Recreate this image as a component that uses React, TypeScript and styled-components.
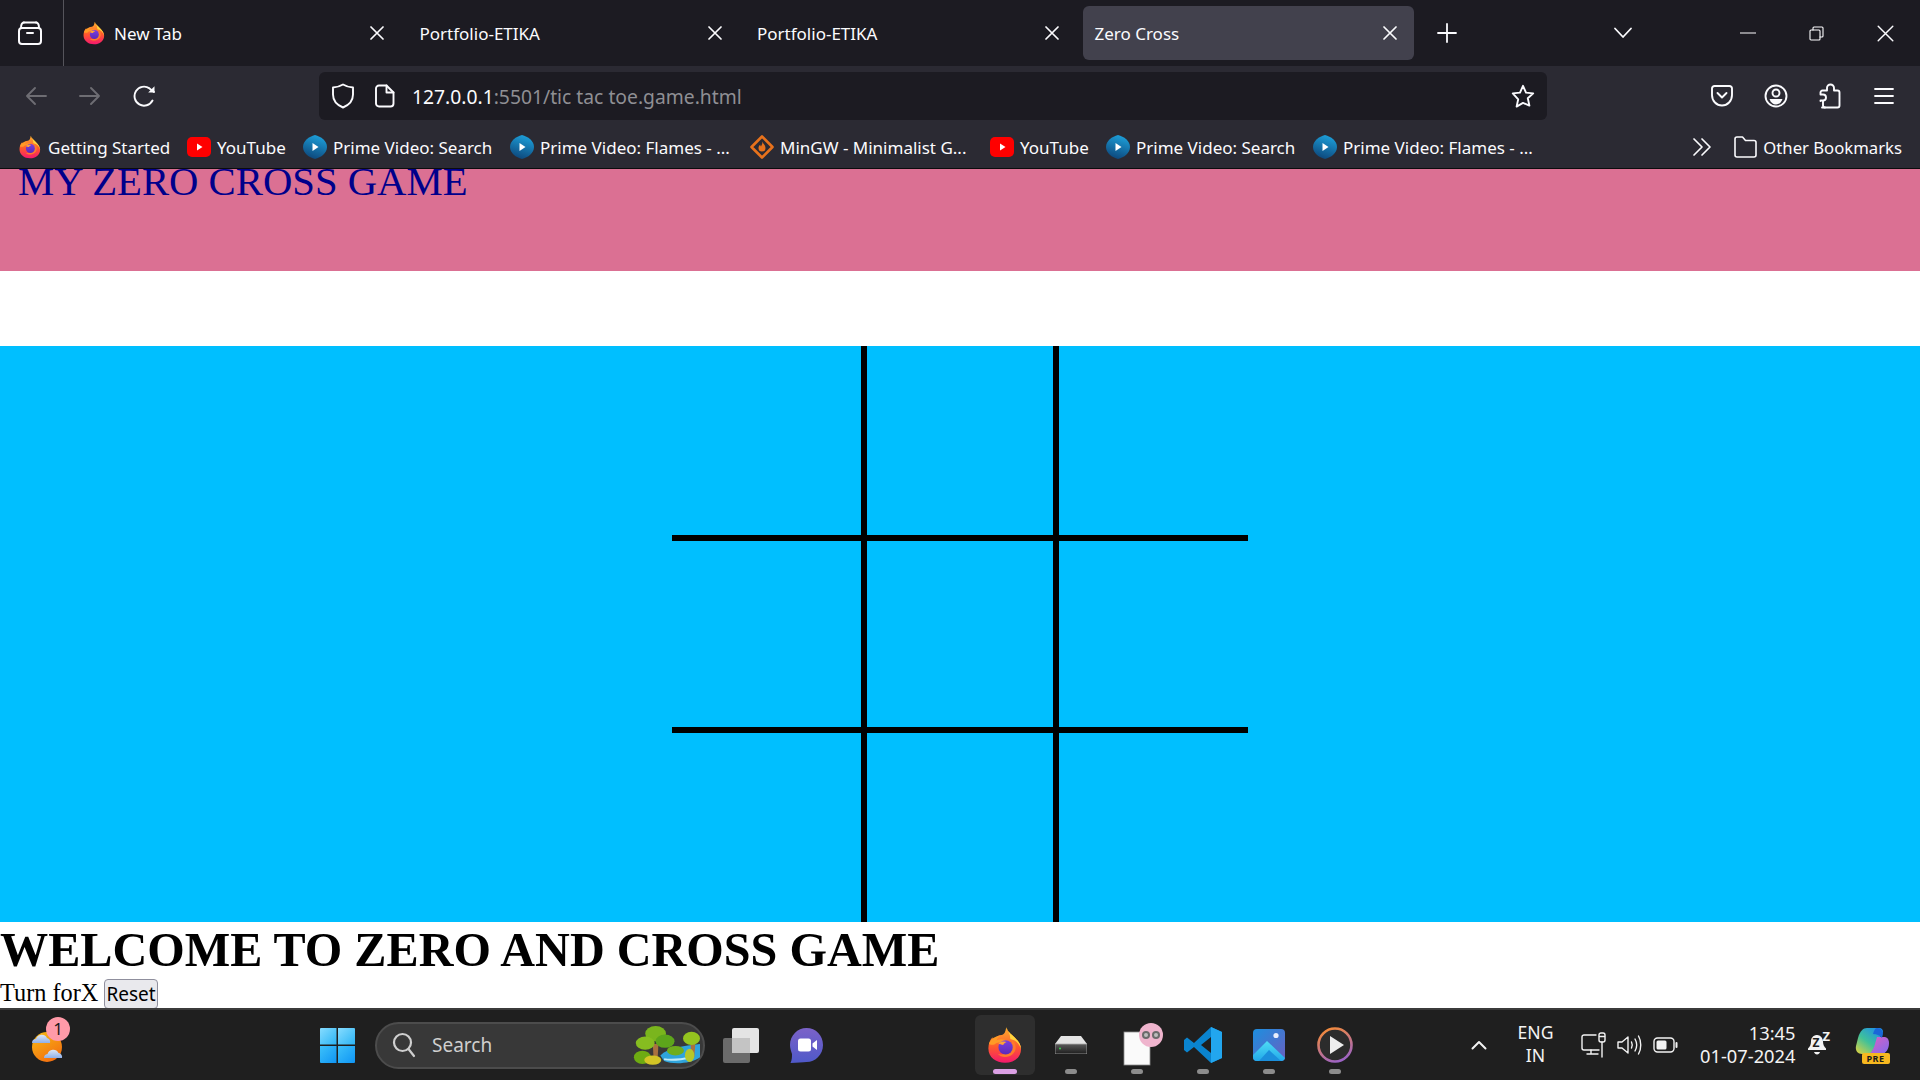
import React from 'react';
import styled, { createGlobalStyle } from 'styled-components';

const UI_FONT = '"Noto Sans", "Open Sans", sans-serif';
const PAGE_FONT = '"Liberation Serif", "Times New Roman", serif';

const GlobalStyle = createGlobalStyle`
  html, body {
    margin: 0;
    padding: 0;
    height: 100%;
    overflow: hidden;
    background: #fff;
  }
  #root {
    height: 100%;
  }
`;

/* ---------- icons ---------- */

const Line = styled.svg.attrs({ fill: 'none', stroke: 'currentColor', strokeLinecap: 'round', strokeLinejoin: 'round' })`
  display: block;
  flex: none;
`;

const Pic = styled.svg`
  display: block;
  flex: none;
`;

const FirefoxLogo = ({ size, uid }: { size: number; uid: string }) => (
  <Pic width={size} height={size} viewBox="0 0 32 32">
    <defs>
      <linearGradient id={`${uid}-body`} x1="0.5" y1="0" x2="0.5" y2="1">
        <stop offset="0" stopColor="#ffb02e" />
        <stop offset="0.55" stopColor="#ff5a2c" />
        <stop offset="1" stopColor="#f5186e" />
      </linearGradient>
      <linearGradient id={`${uid}-core`} x1="0.5" y1="0" x2="0.5" y2="1">
        <stop offset="0" stopColor="#7a3fe0" />
        <stop offset="1" stopColor="#5b2ab8" />
      </linearGradient>
    </defs>
    <path d="M17 1c1 3.500 4 5.500 7 8.500 3 3 5.500 6 5.500 10 0 7-6 11.500-13.500 11.500S2 26.500 2 19c0-4 1.500-7.500 3.500-9.500 0 1 .5 2 1 2.500C8 9 10.500 7.500 13 7.500c2.500 0 3.500-3 4-6.500z" fill={`url(#${uid}-body)`} />
    <path d="M17 1c1 3.500 4 5.500 7 8.500 3 3 5.500 6 5.500 10-1.500-4.500-4-7.500-9-8.500C20.500 7.500 19 4.500 17 1z" fill="#ffd53d" />
    <path d="M2.500 15c1.500-4 5-6.500 9.500-6.500-1.500 1-2.500 2-3 3.500 3-1.500 7-1 9.500 1-2.500-.5-4.500 0-6 1-2-.5-4 0-5.500 1.500-1.500.5-3.500.500-4.500-.500z" fill="#ff9a26" />
    <path d="M22 12c2 1.500 3 3.500 3 6 0 4.500-4 8-9 8-2.500 0-4.500-1-6-2.500 5 1.500 11-1 12-11.500z" fill="#ff7a2a" />
    <circle cx="16.500" cy="18" r="6" fill={`url(#${uid}-core)`} />
    <path d="M10.500 14.500c2-1.500 5-2 7-1-1.500.5-2.500 1.500-3 2.500-1.500-.5-3-.5-4-1.500z" fill="#ffa436" />
  </Pic>
);

const YouTubeIcon = () => (
  <Pic width={24} height={20} viewBox="0 0 24 20">
    <rect width="24" height="20" rx="5" fill="#f00" />
    <path d="M10 6.500 15.500 10 10 13.500z" fill="#fff" />
  </Pic>
);

const PrimeIcon = ({ uid }: { uid: string }) => (
  <Pic width={24} height={24} viewBox="0 0 24 24">
    <defs>
      <linearGradient id={uid} x1="0.6" y1="0" x2="0.3" y2="1">
        <stop offset="0" stopColor="#1d9fd9" />
        <stop offset="1" stopColor="#0d4579" />
      </linearGradient>
    </defs>
    <path d="M12 0c6 1.500 12 6 12 12s-6 10.500-12 12C6 22.500 0 18 0 12S6 1.500 12 0z" fill={`url(#${uid})`} />
    <path d="M9.500 8 15.500 12l-6 4z" fill="#fff" />
  </Pic>
);

const MingwIcon = () => (
  <Pic width={24} height={24} viewBox="0 0 24 24">
    <path d="M12 1.500 22.500 12 12 22.500 1.500 12z" fill="none" stroke="#e8721c" strokeWidth="2.600" strokeLinejoin="round" />
    <path d="M12.500 6.500c.5 2.500 3 3.500 3 6.500a3.500 3.500 0 0 1-7 0c0-1.500.8-2.500 1.800-3.500 0 1 .2 1.500.7 2 .8-1.500 1.500-3 1.500-5z" fill="#e8721c" />
  </Pic>
);

const SidebarIcon = () => (
  <Line width={26} height={26} viewBox="0 0 26 26" strokeWidth={2}>
    <rect x="2" y="8" width="22" height="16" rx="3" />
    <path d="M6.500 2.500h13M10 13h6" />
    <path d="M4 8c0-3 1-5.500 3-5.500M22 8c0-3-1-5.500-3-5.500" />
  </Line>
);

const CloseIcon = ({ size = 14, weight = 1.7 }: { size?: number; weight?: number }) => (
  <Line width={size} height={size} viewBox="0 0 14 14" strokeWidth={weight}>
    <path d="M1 1l12 12M13 1 1 13" />
  </Line>
);

const PlusIcon = () => (
  <Line width={20} height={20} viewBox="0 0 20 20" strokeWidth={1.8}>
    <path d="M10 1v18M1 10h18" />
  </Line>
);

const ChevronDownIcon = () => (
  <Line width={20} height={12} viewBox="0 0 20 12" strokeWidth={1.8}>
    <path d="M2 1.500 10 10l8-8.500" />
  </Line>
);

const MinimizeIcon = () => (
  <Line width={16} height={2} viewBox="0 0 16 2" strokeWidth={1.2}>
    <path d="M0 1h16" />
  </Line>
);

const RestoreIcon = () => (
  <Line width={15} height={15} viewBox="0 0 15 15" strokeWidth={1.1}>
    <rect x="1" y="4" width="10" height="10" rx="1" />
    <path d="M4 4V2a1 1 0 0 1 1-1h8a1 1 0 0 1 1 1v8a1 1 0 0 1-1 1h-2" />
  </Line>
);

const BackIcon = () => (
  <Line width={22} height={20} viewBox="0 0 22 20" strokeWidth={1.9}>
    <path d="M21 10H2M10 2l-8 8 8 8" />
  </Line>
);

const ForwardIcon = () => (
  <Line width={22} height={20} viewBox="0 0 22 20" strokeWidth={1.9}>
    <path d="M1 10h19M12 2l8 8-8 8" />
  </Line>
);

const ReloadIcon = () => (
  <Line width={23} height={23} viewBox="0 0 23 23" strokeWidth={1.9}>
    <path d="M19.500 15.500A9.500 9.500 0 1 1 16.500 3.400L21 7" />
    <path d="M21.500 1.200v6.300h-6.300z" fill="currentColor" stroke="none" />
  </Line>
);

const ShieldIcon = () => (
  <Line width={24} height={26} viewBox="0 0 24 26" strokeWidth={1.9}>
    <path d="M12 1.500c3 1.800 6 2.800 10 3v7c0 6.500-4 10.500-10 13-6-2.500-10-6.500-10-13v-7c4-.2 7-1.200 10-3z" />
  </Line>
);

const PageIcon = () => (
  <Line width={20} height={24} viewBox="0 0 20 24" strokeWidth={1.9}>
    <path d="M4 1.500h7.500L18.500 8.500V19.500a3 3 0 0 1-3 3H4a3 3 0 0 1-3-3v-15a3 3 0 0 1 3-3z" />
    <path d="M11.500 1.500v7h7" />
  </Line>
);

const StarIcon = () => (
  <Line width={24} height={24} viewBox="0 0 24 24" strokeWidth={1.9}>
    <path d="M12 1.800l3 6.800 7.200.8-5.400 4.900 1.600 7.300L12 18.900l-6.400 3.700 1.600-7.300L1.800 9.400 9 8.600z" />
  </Line>
);

const PocketIcon = () => (
  <Line width={22} height={24} viewBox="0 0 22 24" strokeWidth={1.9}>
    <path d="M3.500 2h15A2.500 2.500 0 0 1 21 4.500V11c0 6-4.500 10.500-10 10.500S1 17 1 11V4.500A2.500 2.500 0 0 1 3.500 2z" />
    <path d="M6.500 9l4.500 4.500L15.500 9" />
  </Line>
);

const AccountIcon = () => (
  <Line width={24} height={24} viewBox="0 0 24 24" strokeWidth={1.9}>
    <circle cx="12" cy="12" r="10.500" />
    <circle cx="12" cy="9" r="3.500" />
    <path d="M5.500 15h13c-1 3.500-3.500 5.500-6.500 5.500S6.500 18.500 5.500 15z" fill="currentColor" stroke="none" />
  </Line>
);

const PuzzleIcon = () => (
  <Line width={22} height={26} viewBox="0 0 22 26" strokeWidth={1.9}>
    <path d="M3 24.500h15.500a2 2 0 0 0 2-2V9.500a2 2 0 0 0-2-2h-3.500V5a3.500 3.500 0 0 0-7 0v2.500H3.500a2 2 0 0 0-2 2v2h2.500a3 3 0 0 1 0 6H1.500v.5" />
    <path d="M4 18v4.500a2 2 0 0 0 2 2" />
  </Line>
);

const MenuIcon = () => (
  <Line width={20} height={18} viewBox="0 0 20 18" strokeWidth={1.8}>
    <path d="M1 2h18M1 9h18M1 16h18" />
  </Line>
);

const DoubleChevronIcon = () => (
  <Line width={20} height={20} viewBox="0 0 20 20" strokeWidth={1.7}>
    <path d="M2 2l8 8-8 8M10 2l8 8-8 8" />
  </Line>
);

const FolderIcon = () => (
  <Line width={23} height={22} viewBox="0 0 23 22" strokeWidth={1.6}>
    <path d="M3 1h5.500l3 3.500H20a2 2 0 0 1 2 2V19a2 2 0 0 1-2 2H3a2 2 0 0 1-2-2V3a2 2 0 0 1 2-2z" />
  </Line>
);

const WeatherIcon = () => (
  <Pic width={44} height={44} viewBox="0 0 44 44">
    <defs>
      <linearGradient id="sun" x1="0.2" y1="0" x2="0.8" y2="1">
        <stop offset="0" stopColor="#f7b614" />
        <stop offset="1" stopColor="#f36a10" />
      </linearGradient>
      <linearGradient id="cloud" x1="0.5" y1="0" x2="0.5" y2="1">
        <stop offset="0" stopColor="#dbe6f5" />
        <stop offset="1" stopColor="#8fb0e8" />
      </linearGradient>
    </defs>
    <circle cx="18" cy="24" r="15" fill="url(#sun)" />
    <path d="M3 20a4 4 0 0 1 4-4 6 6 0 0 1 11-1 4 4 0 0 1 3 5z" fill="url(#cloud)" />
    <path d="M15 35a4 4 0 0 1 3.500-4 6 6 0 0 1 11-1 4 4 0 0 1 3.500 5z" fill="url(#cloud)" />
  </Pic>
);

const WindowsIcon = () => (
  <Pic width={35} height={35} viewBox="0 0 35 35">
    <defs>
      <linearGradient id="winA" x1="0" y1="0" x2="1" y2="1">
        <stop offset="0" stopColor="#86dcff" />
        <stop offset="1" stopColor="#2cb4f5" />
      </linearGradient>
      <linearGradient id="winB" x1="0" y1="0" x2="1" y2="1">
        <stop offset="0" stopColor="#3dc1fa" />
        <stop offset="1" stopColor="#0f95f4" />
      </linearGradient>
    </defs>
    <path d="M1 0h15.500v16.500H0V1a1 1 0 0 1 1-1z" fill="url(#winA)" />
    <path d="M18 0h16a1 1 0 0 1 1 1v15.500H18z" fill="url(#winA)" />
    <path d="M0 18h16.500v17H1a1 1 0 0 1-1-1z" fill="url(#winB)" />
    <path d="M18 18h17v16a1 1 0 0 1-1 1H18z" fill="url(#winB)" />
  </Pic>
);

const SearchGlyph = () => (
  <Line width={24} height={26} viewBox="0 0 24 26" strokeWidth={2.200}>
    <circle cx="10.500" cy="10.500" r="8.500" />
    <path d="M16.500 17l5.500 7" />
  </Line>
);

const TreesArt = () => (
  <Pic width={68} height={42} viewBox="0 0 72 42">
    <path d="M30 32c8-8 24-10 42-12v14c-10 7-28 8-38 4z" fill="#2fa4dc" />
    <path d="M34 36c10 2 20 0 30-2" stroke="#bfeaf8" strokeWidth="2" fill="none" />
    <path d="M22 20l1 18h4l1-18z" fill="#a9713f" />
    <path d="M62 20l1 14h3l1-14z" fill="#a9713f" />
    <ellipse cx="25" cy="9" rx="11" ry="8" fill="#7ab51d" />
    <ellipse cx="14" cy="19" rx="10" ry="7" fill="#86bd20" />
    <ellipse cx="35" cy="17" rx="10" ry="7" fill="#5da51b" />
    <ellipse cx="63" cy="14" rx="9" ry="7" fill="#94c41f" />
    <ellipse cx="46" cy="27" rx="9" ry="5" fill="#6fad1c" />
    <ellipse cx="11" cy="34" rx="9" ry="7" fill="#6eab12" />
    <ellipse cx="22" cy="37" rx="9" ry="5" fill="#d3c526" />
    <ellipse cx="61" cy="32" rx="5" ry="7" fill="#b6c729" />
  </Pic>
);

const TaskViewIcon = () => (
  <Pic width={38} height={35} viewBox="0 0 38 35">
    <rect x="0" y="10" width="27" height="25" rx="2" fill="#6b6b6b" />
    <rect x="9" y="0" width="27" height="25" rx="2" fill="#f5f5f5" fillOpacity="0.92" />
    <rect x="9" y="10" width="18" height="15" fill="#c4c4c4" />
  </Pic>
);

const MeetIcon = () => (
  <Pic width={33} height={35} viewBox="0 0 33 35">
    <defs>
      <linearGradient id="meet" x1="0.5" y1="0" x2="0.5" y2="1">
        <stop offset="0" stopColor="#7b62c8" />
        <stop offset="1" stopColor="#4f59c9" />
      </linearGradient>
    </defs>
    <path d="M16.500 0C26 0 33 7.500 33 17s-7.500 17-16.500 17c-3.500 0-9 1-16 1 1.500-3 1.500-6 1.500-9C1 23 0 20 0 17 0 7.500 7.500 0 16.500 0z" fill="url(#meet)" />
    <rect x="8" y="10.500" width="13" height="13" rx="2.500" fill="#fff" />
    <path d="M22.500 15.500 27 12v10l-4.500-3.500z" fill="#fff" />
  </Pic>
);

const DriveIcon = () => (
  <Pic width={32} height={18} viewBox="0 0 32 18">
    <defs>
      <linearGradient id="drive" x1="0.5" y1="0" x2="0.5" y2="1">
        <stop offset="0" stopColor="#5a5a5a" />
        <stop offset="1" stopColor="#1d1d1d" />
      </linearGradient>
    </defs>
    <path d="M6 0h20l6 8H0z" fill="#e4e4e4" />
    <rect x="0" y="8" width="32" height="10" rx="1" fill="url(#drive)" stroke="#a8a8a8" strokeWidth="0.8" />
    <circle cx="5" cy="12.500" r="1" fill="#35d24a" />
  </Pic>
);

const NotesIcon = () => (
  <Pic width={52} height={44} viewBox="0 0 52 44">
    <rect x="13" y="9" width="26" height="33" fill="#fafafa" stroke="#8d8d8d" strokeWidth="0.8" />
    <circle cx="40" cy="12" r="12" fill="#efb4cd" />
    <circle cx="35" cy="12" r="4" fill="#6b6b6b" />
    <circle cx="45" cy="12" r="4" fill="#6b6b6b" />
    <circle cx="35" cy="12" r="2" fill="#bdbdbd" />
    <circle cx="45" cy="12" r="2" fill="#bdbdbd" />
  </Pic>
);

const VsCodeIcon = () => (
  <Pic width={38} height={36} viewBox="0 0 38 36">
    <path d="M27 0l11 5v26l-11 5-17-16-7 5.500-3-2.500v-10l3-2.500 7 5.500zm0 10L17 18l10 8z" fill="#0a84cf" />
    <path d="M27 0l11 5v26l-11 5z" fill="#22a6ee" />
  </Pic>
);

const PhotosIcon = () => (
  <Pic width={32} height={32} viewBox="0 0 32 32">
    <defs>
      <linearGradient id="ph" x1="0" y1="0" x2="1" y2="1">
        <stop offset="0" stopColor="#1c8fe0" />
        <stop offset="1" stopColor="#6a5fc0" />
      </linearGradient>
      <linearGradient id="phM" x1="0.5" y1="0" x2="0.5" y2="1">
        <stop offset="0" stopColor="#4fdcf5" />
        <stop offset="1" stopColor="#22a8ea" />
      </linearGradient>
    </defs>
    <rect width="32" height="32" rx="4" fill="url(#ph)" />
    <circle cx="23" cy="6.500" r="2.600" fill="#e8eefc" />
    <path d="M0 26 14 12l18 17v-1a4 4 0 0 1-4 4H4a4 4 0 0 1-4-4z" fill="url(#phM)" />
    <path d="M6 32l10-11 12 11z" fill="#1b8fdc" />
  </Pic>
);

const PlayerIcon = () => (
  <Pic width={36} height={36} viewBox="0 0 36 36">
    <defs>
      <linearGradient id="pl" x1="0.3" y1="0" x2="0.7" y2="1">
        <stop offset="0" stopColor="#f28a3c" />
        <stop offset="1" stopColor="#9a62c8" />
      </linearGradient>
    </defs>
    <circle cx="18" cy="18" r="16.500" fill="#2c2c2c" stroke="url(#pl)" strokeWidth="2.600" />
    <path d="M13 9l14 9-14 9z" fill="#eee" />
  </Pic>
);

const TrayChevron = () => (
  <Line width={16} height={10} viewBox="0 0 16 10" strokeWidth={2}>
    <path d="M1.500 8.500 8 2l6.500 6.500" />
  </Line>
);

const NetworkIcon = () => (
  <Line width={25} height={26} viewBox="0 0 25 26" strokeWidth={1.4}>
    <path d="M15 3H3a2 2 0 0 0-2 2v11a2 2 0 0 0 2 2h15" />
    <path d="M6 22h11M10 18v4" />
    <rect x="18" y="1" width="6" height="9" rx="2" />
    <path d="M21 10v15M18.500 4.500h5" />
  </Line>
);

const VolumeIcon = () => (
  <Line width={25} height={22} viewBox="0 0 25 22" strokeWidth={1.4}>
    <path d="M1 8v6h4l6 5V3L5 8z" />
    <path d="M14.500 8c1 2 1 4 0 6M18 5c2 3.500 2 8.500 0 12M21.500 2c3 5 3 13 0 18" />
  </Line>
);

const BatteryIcon = () => (
  <Line width={25} height={16} viewBox="0 0 25 16" strokeWidth={1.4}>
    <rect x="1" y="1" width="20" height="14" rx="3.500" />
    <rect x="3.500" y="3.500" width="10" height="9" rx="1.500" fill="currentColor" stroke="none" />
    <path d="M23.500 6v4" strokeWidth={2} />
  </Line>
);

const BellIcon = () => (
  <Pic width={26} height={26} viewBox="0 0 26 26">
    <path d="M9.500 5c-3.500.5-5.500 3-5.500 6.500 0 3-1 5-3 7V20h18v-1.500c-2-2-3-4-3-7C16 8 13 4.500 9.500 5z" fill="#f3f3f3" />
    <path d="M7 22h6c-.5 1.500-1.500 2.500-3 2.500S7.500 23.500 7 22z" fill="#f3f3f3" />
    <text x="5.500" y="17" fontSize="12" fontWeight="700" fontFamily="Noto Sans, sans-serif" fill="#1f1f1f">Z</text>
    <text x="15.500" y="11" fontSize="13" fontWeight="700" fontFamily="Noto Sans, sans-serif" fill="#f3f3f3">Z</text>
  </Pic>
);

const CopilotIcon = () => (
  <Pic width={34} height={27} viewBox="0 0 34 27">
    <defs>
      <linearGradient id="coA" x1="0" y1="1" x2="0.8" y2="0">
        <stop offset="0" stopColor="#e8d33a" />
        <stop offset="0.5" stopColor="#3fc19a" />
        <stop offset="1" stopColor="#1f8fe8" />
      </linearGradient>
      <linearGradient id="coB" x1="0" y1="0" x2="1" y2="1">
        <stop offset="0" stopColor="#e05fc0" />
        <stop offset="1" stopColor="#7d6cf0" />
      </linearGradient>
    </defs>
    <path d="M12 1h12c3 0 4 2 4 4L16 27H7c-4 0-7-3-6-8l2-8C5 4 8 1 12 1z" fill="url(#coA)" />
    <path d="M22 10h7c3 0 5 2 5 6 0 6-3 11-8 11H14c3-2 5-6 6-10z" fill="url(#coB)" />
    <path d="M22 1c4 0 6 3 6 6l-1 4c-3-3-5-4-9-4 1-3 2-6 4-6z" fill="#1a66d8" />
  </Pic>
);

/* ---------- browser chrome ---------- */

const Screen = styled.div`
  display: flex;
  flex-direction: column;
  width: 1920px;
  height: 1080px;
  overflow: hidden;
  font-family: ${UI_FONT};
`;

const TabBar = styled.div`
  display: flex;
  flex: none;
  height: 66px;
  background: #1c1b22;
  color: #fbfbfe;
`;

const SidebarButton = styled.div`
  display: flex;
  align-items: center;
  justify-content: center;
  box-sizing: border-box;
  width: 64px;
  padding-right: 3px;
  border-right: 1px solid #55545b;
`;

const Tabs = styled.div`
  display: flex;
  gap: 6.5px;
  margin-left: 6px;
  padding-top: 6px;
`;

const Tab = styled.div<{ $active?: boolean }>`
  display: flex;
  align-items: center;
  box-sizing: border-box;
  width: 331px;
  height: 54px;
  padding: 0 17px 0 12px;
  border-radius: 6px;
  background: ${(p) => (p.$active ? '#42414d' : 'transparent')};
  font-size: 17px;
  gap: 8px;
`;

const TabTitle = styled.span`
  flex: 1;
`;

const IconSlot = styled.div<{ $w?: number }>`
  display: flex;
  flex: none;
  align-items: center;
  justify-content: center;
  width: ${(p) => p.$w ?? 54}px;
`;

const PlusSlot = styled(IconSlot)`
  margin-left: 6px;
`;

const ListSlot = styled(IconSlot)`
  margin-left: 122px;
`;

const WindowControls = styled.div`
  display: flex;
  margin-left: auto;
`;

const NavBar = styled.div`
  display: flex;
  flex: none;
  align-items: center;
  box-sizing: border-box;
  height: 54px;
  padding-top: 6px;
  background: #2b2a33;
  color: #fbfbfe;
`;

const NavButtons = styled.div`
  display: flex;
  box-sizing: border-box;
  width: 319px;
  padding-left: 9px;
`;

const DimSlot = styled(IconSlot)`
  color: #6e6d73;
`;

const UrlBar = styled.div`
  display: flex;
  align-items: center;
  box-sizing: border-box;
  width: 1228px;
  height: 48px;
  padding: 0 12px;
  border-radius: 6px;
  background: #1c1b22;
`;

const UrlPage = styled.span`
  display: flex;
  margin-left: 20px;
`;

const UrlText = styled.span`
  flex: 1;
  margin-left: 17px;
  font-size: 19.3px;
  color: #fbfbfe;
  white-space: pre;
`;

const UrlRest = styled.span`
  color: #8f8f94;
`;

const NavActions = styled.div`
  display: flex;
  padding-left: 148px;
`;

const BookmarkBar = styled.div`
  display: flex;
  flex: none;
  align-items: center;
  box-sizing: border-box;
  height: 49px;
  padding: 6px 18px 0 18px;
  background: #2b2a33;
  border-bottom: 1px solid #0c0c0d;
  color: #fbfbfe;
  font-size: 17px;
`;

const Bookmark = styled.div<{ $w: number }>`
  display: flex;
  flex: none;
  align-items: center;
  gap: 6px;
  width: ${(p) => p.$w}px;
  white-space: nowrap;
`;

const BookmarkTail = styled.div`
  display: flex;
  align-items: center;
  margin-left: auto;
`;

const OtherBookmarks = styled.div`
  display: flex;
  align-items: center;
  gap: 6px;
  margin-left: 22px;
  font-size: 16.7px;
`;

/* ---------- the page ---------- */

const Viewport = styled.main`
  flex: 1;
  min-height: 0;
  overflow: hidden;
  background: #fff;
  color: #000;
  font-family: ${PAGE_FONT};
`;

const Header = styled.header`
  height: 102px;
  overflow: hidden;
  background: palevioletred;
`;

/* the page in the reference is scrolled, so the title sits cut off at the top */
const HeaderTitle = styled.div`
  margin: -10px 0 0 18px;
  font-size: 40.7px;
  line-height: 46px;
  color: darkblue;
`;

const BoardBand = styled.section`
  display: flex;
  justify-content: center;
  margin-top: 75px;
  background: deepskyblue;
`;

const Board = styled.div`
  display: grid;
  grid-template-columns: repeat(3, 192px);
  grid-template-rows: repeat(3, 192px);
`;

const Cell = styled.div<{ $row: number; $col: number }>`
  box-sizing: border-box;
  border-style: solid;
  border-color: #000;
  border-width: ${(p) => (p.$row === 0 ? 0 : 3)}px ${(p) => (p.$col === 2 ? 0 : 3)}px
    ${(p) => (p.$row === 2 ? 0 : 3)}px ${(p) => (p.$col === 0 ? 0 : 3)}px;
`;

const Welcome = styled.h1`
  margin: 0;
  font-size: 48.2px;
  line-height: 55px;
  font-weight: 700;
`;

const TurnLine = styled.div`
  font-size: 24.3px;
  line-height: 32px;
  white-space: pre;
`;

const ResetButton = styled.button`
  box-sizing: border-box;
  height: 30px;
  padding: 0 1px;
  border: 1px solid #8f8f9d;
  border-radius: 4px;
  background: #e9e9ed;
  color: #000;
  font-family: ${UI_FONT};
  font-size: 19px;
  line-height: 24px;
`;

/* ---------- taskbar ---------- */

const Taskbar = styled.footer`
  display: flex;
  flex: none;
  align-items: center;
  box-sizing: border-box;
  height: 72px;
  border-top: 2px solid #3b3b3b;
  background: #1f1f1f;
  color: #f3f3f3;
`;

const TaskLeft = styled.div`
  display: flex;
  flex: none;
  align-items: center;
  box-sizing: border-box;
  width: 972px;
  padding-left: 29px;
`;

const Weather = styled.div`
  position: relative;
  width: 44px;
  height: 44px;
`;

const WeatherBadge = styled.span`
  position: absolute;
  top: -6px;
  right: 3px;
  width: 24px;
  height: 24px;
  border-radius: 50%;
  background: #ff9aa8;
  color: #1a1a1a;
  font-size: 17px;
  line-height: 24px;
  text-align: center;
`;

const StartButton = styled.div`
  margin-left: 247px;
`;

const SearchBox = styled.div`
  display: flex;
  align-items: center;
  box-sizing: border-box;
  width: 330px;
  height: 47px;
  margin-left: 20px;
  padding: 0 3px 0 15px;
  border: 2px solid #4c4c4c;
  border-radius: 24px;
  background: #383838;
  color: #cfcfcf;
  font-size: 19px;
`;

const SearchLabel = styled.span`
  flex: 1;
  margin-left: 16px;
`;

const TaskView = styled.div`
  margin-left: 18px;
`;

const Meet = styled.div`
  margin-left: 29px;
`;

const PinnedApps = styled.div`
  display: flex;
  flex: none;
`;

const AppSlot = styled.div<{ $active?: boolean }>`
  position: relative;
  display: flex;
  align-items: center;
  justify-content: center;
  box-sizing: border-box;
  width: 66px;
  height: 60px;
  border-radius: 6px;
  background: ${(p) => (p.$active ? '#2e2e2e' : 'transparent')};
`;

const ActiveBox = styled(AppSlot)`
  width: 60px;
  margin: 0 3px;
`;

const RunDot = styled.span<{ $active?: boolean }>`
  position: absolute;
  bottom: 1px;
  left: 50%;
  width: ${(p) => (p.$active ? 24 : 12)}px;
  height: 5px;
  border-radius: 3px;
  background: ${(p) => (p.$active ? '#dba0e4' : '#8c8c8c')};
  transform: translateX(-50%);
`;

const Tray = styled.div`
  display: flex;
  flex: 1;
  align-items: center;
  font-size: 17.6px;
`;

const TrayChevronSlot = styled.div`
  margin-left: 103px;
`;

const LangBlock = styled.div`
  width: 60px;
  margin: 0 0 2px 18.5px;
  line-height: 23px;
  text-align: center;
`;

const TrayIcons = styled.div`
  display: flex;
  align-items: center;
  gap: 11px;
  margin-left: 15px;
`;

const Clock = styled.div`
  width: 106px;
  margin: 0 0 3px 12px;
  font-size: 18.3px;
  line-height: 23px;
  text-align: right;
`;

const BellSlot = styled.div`
  margin: 0 0 4px 11px;
`;

const Copilot = styled.div`
  position: relative;
  width: 34px;
  height: 37px;
  margin-left: 22px;
`;

const PreBadge = styled.span`
  position: absolute;
  left: 7px;
  bottom: 0;
  width: 28px;
  height: 11px;
  border-radius: 2px;
  background: #f7b81f;
  color: #1a1a1a;
  font-size: 9px;
  font-weight: 700;
  line-height: 11px;
  text-align: center;
  letter-spacing: 0.5px;
`;

const tabs = [
  { title: 'Portfolio-ETIKA' },
  { title: 'Portfolio-ETIKA' },
  { title: 'Zero Cross', active: true },
];

const bookmarks = [
  { label: 'Getting Started', w: 169, icon: <FirefoxLogo size={24} uid="bm" /> },
  { label: 'YouTube', w: 116, icon: <YouTubeIcon /> },
  { label: 'Prime Video: Search', w: 207, icon: <PrimeIcon uid="pv1" /> },
  { label: 'Prime Video: Flames - ...', w: 240, icon: <PrimeIcon uid="pv2" /> },
  { label: 'MinGW - Minimalist G...', w: 240, icon: <MingwIcon /> },
  { label: 'YouTube', w: 116, icon: <YouTubeIcon /> },
  { label: 'Prime Video: Search', w: 207, icon: <PrimeIcon uid="pv3" /> },
  { label: 'Prime Video: Flames - ...', w: 240, icon: <PrimeIcon uid="pv4" /> },
];

const pinned = [<DriveIcon />, <NotesIcon />, <VsCodeIcon />, <PhotosIcon />, <PlayerIcon />];

const App = () => {
  return (
    <Screen>
      <GlobalStyle />
      <TabBar>
        <SidebarButton>
          <SidebarIcon />
        </SidebarButton>
        <Tabs>
          <Tab>
            <FirefoxLogo size={24} uid="tab" />
            <TabTitle>New Tab</TabTitle>
            <CloseIcon />
          </Tab>
          {tabs.map((t, i) => (
            <Tab key={i} $active={t.active}>
              <TabTitle>{t.title}</TabTitle>
              <CloseIcon />
            </Tab>
          ))}
        </Tabs>
        <PlusSlot>
          <PlusIcon />
        </PlusSlot>
        <ListSlot>
          <ChevronDownIcon />
        </ListSlot>
        <WindowControls>
          <IconSlot $w={69}>
            <MinimizeIcon />
          </IconSlot>
          <IconSlot $w={69}>
            <RestoreIcon />
          </IconSlot>
          <IconSlot $w={69}>
            <CloseIcon size={17} weight={1.2} />
          </IconSlot>
        </WindowControls>
      </TabBar>

      <NavBar>
        <NavButtons>
          <DimSlot>
            <BackIcon />
          </DimSlot>
          <DimSlot>
            <ForwardIcon />
          </DimSlot>
          <IconSlot>
            <ReloadIcon />
          </IconSlot>
        </NavButtons>
        <UrlBar>
          <ShieldIcon />
          <UrlPage>
            <PageIcon />
          </UrlPage>
          <UrlText>
            127.0.0.1<UrlRest>:5501/tic tac toe.game.html</UrlRest>
          </UrlText>
          <StarIcon />
        </UrlBar>
        <NavActions>
          <IconSlot>
            <PocketIcon />
          </IconSlot>
          <IconSlot>
            <AccountIcon />
          </IconSlot>
          <IconSlot>
            <PuzzleIcon />
          </IconSlot>
          <IconSlot>
            <MenuIcon />
          </IconSlot>
        </NavActions>
      </NavBar>

      <BookmarkBar>
        {bookmarks.map((b, i) => (
          <Bookmark key={i} $w={b.w}>
            {b.icon}
            <span>{b.label}</span>
          </Bookmark>
        ))}
        <BookmarkTail>
          <DoubleChevronIcon />
          <OtherBookmarks>
            <FolderIcon />
            <span>Other Bookmarks</span>
          </OtherBookmarks>
        </BookmarkTail>
      </BookmarkBar>

      <Viewport>
        <Header>
          <HeaderTitle>MY ZERO CROSS GAME</HeaderTitle>
        </Header>
        <BoardBand>
          <Board>
            {Array.from({ length: 9 }, (_, i) => (
              <Cell key={i} $row={Math.floor(i / 3)} $col={i % 3} />
            ))}
          </Board>
        </BoardBand>
        <Welcome>WELCOME TO ZERO AND CROSS GAME</Welcome>
        <TurnLine>
          Turn forX <ResetButton>Reset</ResetButton>
        </TurnLine>
      </Viewport>

      <Taskbar>
        <TaskLeft>
          <Weather>
            <WeatherIcon />
            <WeatherBadge>1</WeatherBadge>
          </Weather>
          <StartButton>
            <WindowsIcon />
          </StartButton>
          <SearchBox>
            <SearchGlyph />
            <SearchLabel>Search</SearchLabel>
            <TreesArt />
          </SearchBox>
          <TaskView>
            <TaskViewIcon />
          </TaskView>
          <Meet>
            <MeetIcon />
          </Meet>
        </TaskLeft>
        <PinnedApps>
          <ActiveBox $active>
            <FirefoxLogo size={38} uid="task" />
            <RunDot $active />
          </ActiveBox>
          {pinned.map((icon, i) => (
            <AppSlot key={i}>
              {icon}
              <RunDot />
            </AppSlot>
          ))}
        </PinnedApps>
        <Tray>
          <TrayChevronSlot>
            <TrayChevron />
          </TrayChevronSlot>
          <LangBlock>
            ENG
            <br />
            IN
          </LangBlock>
          <TrayIcons>
            <NetworkIcon />
            <VolumeIcon />
            <BatteryIcon />
          </TrayIcons>
          <Clock>
            13:45
            <br />
            01-07-2024
          </Clock>
          <BellSlot>
            <BellIcon />
          </BellSlot>
          <Copilot>
            <CopilotIcon />
            <PreBadge>PRE</PreBadge>
          </Copilot>
        </Tray>
      </Taskbar>
    </Screen>
  );
};

export default App;
